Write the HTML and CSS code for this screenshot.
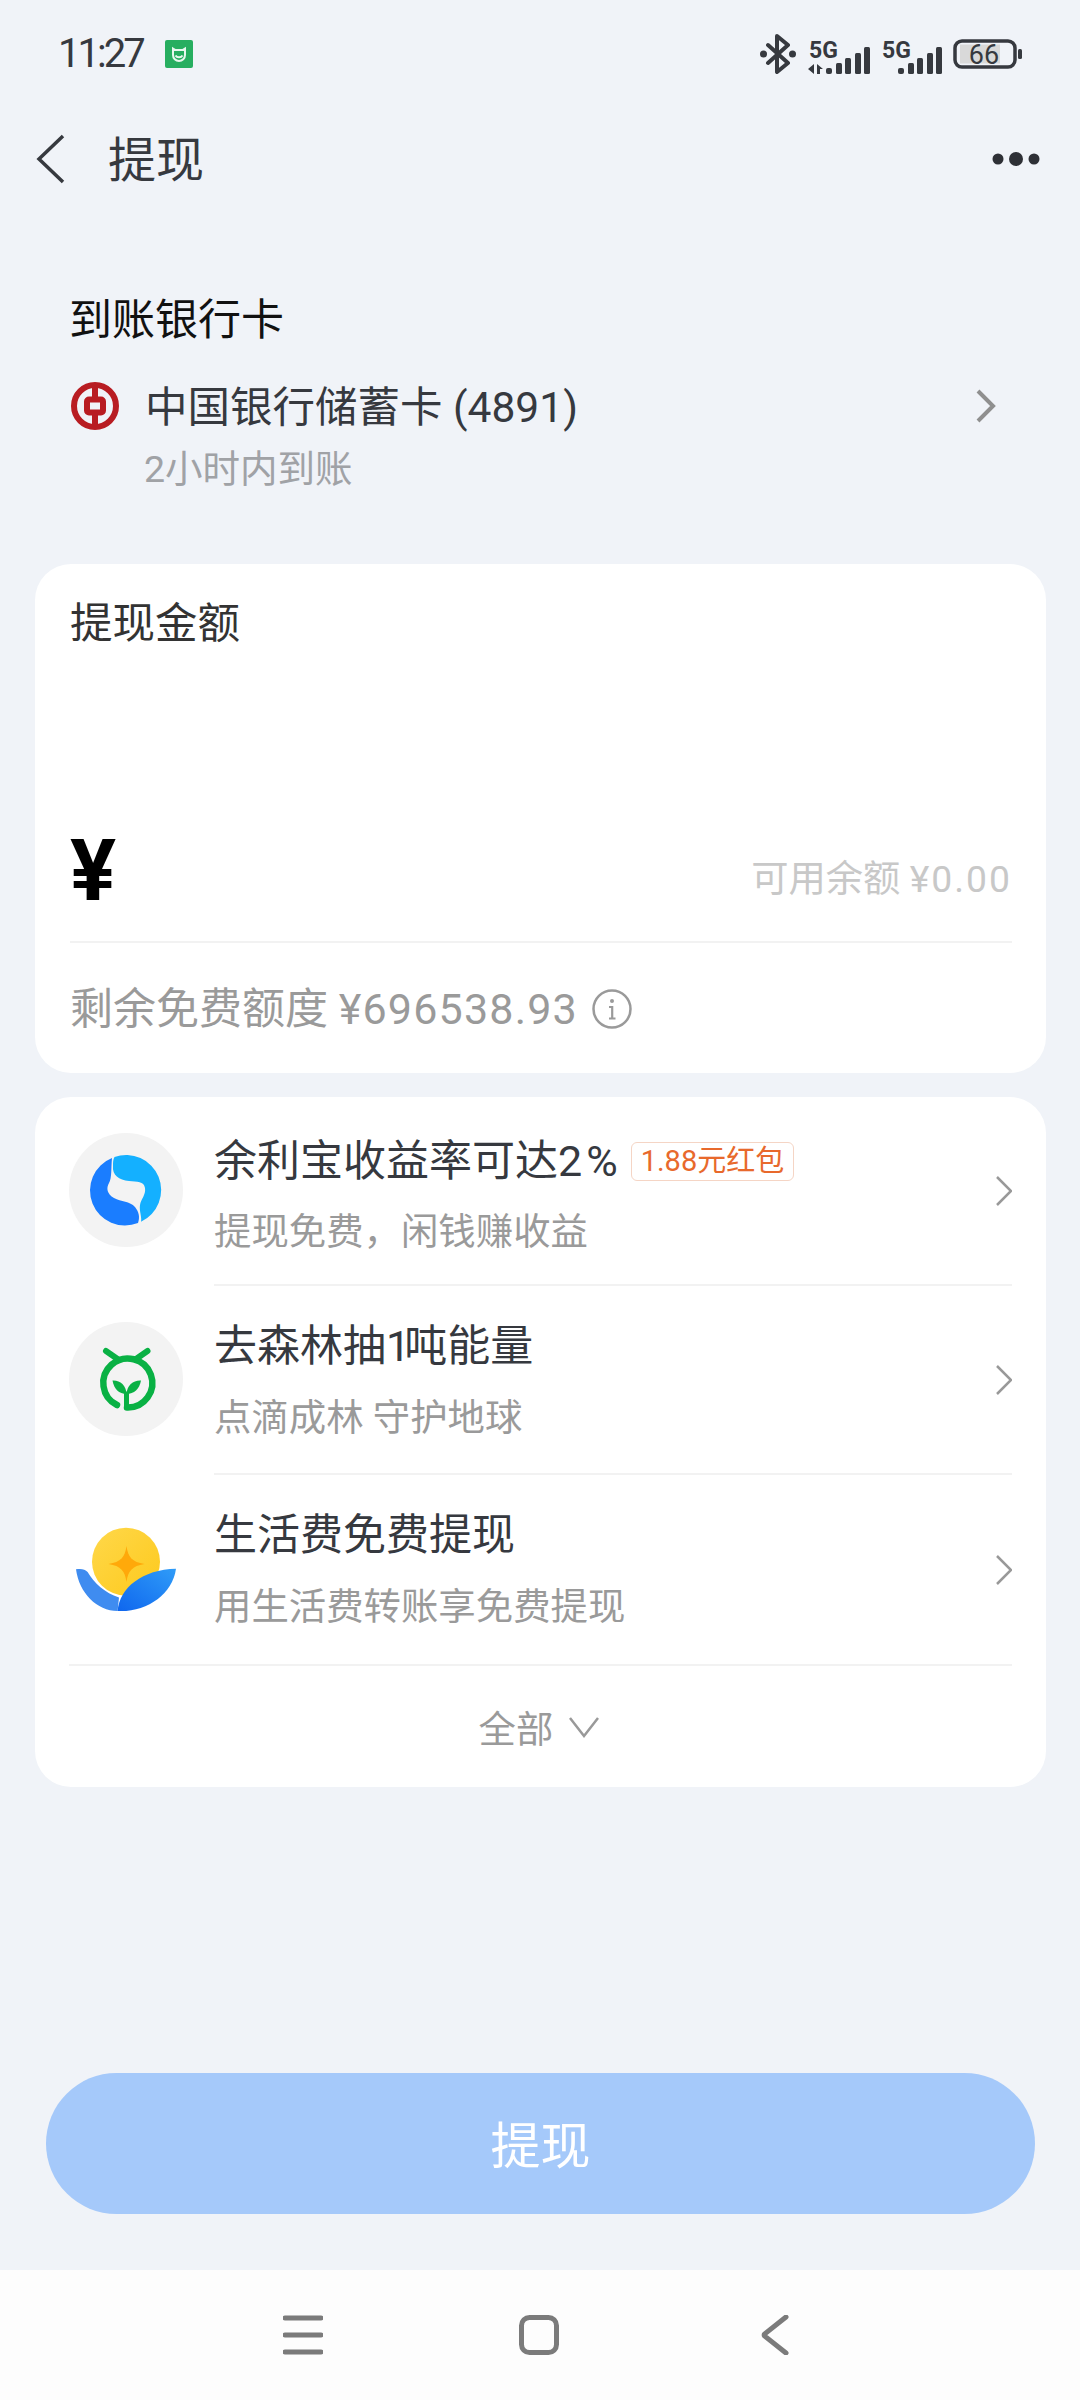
FILE: index.html
```html
<!DOCTYPE html>
<html lang="zh-CN">
<head>
<meta charset="UTF-8">
<title>提现</title>
<link rel="stylesheet" href="styles.css">
</head>
<body>

<div class="status">
  <div class="status-left">
    <span class="time">11:27</span>
    <svg class="mi-icon" width="28" height="28" viewBox="0 0 28 28">
      <rect width="28" height="28" rx="2" fill="#27ae60"/>
      <path d="M8 8.500l2.500 1.500h7L20 8.500V15a6 6 0 0 1-12 0z" fill="none" stroke="#e8f7ee" stroke-width="2"/>
      <path d="M10.500 15.500c1.500 2.400 5.500 2.400 7 0" fill="none" stroke="#e8f7ee" stroke-width="2"/>
    </svg>
  </div>
  <div class="status-right">
    <svg width="36" height="40" viewBox="0 0 36 40">
      <path d="M8 11L28 29L17 38V2L28 11L8 29" fill="none" stroke="#36393f" stroke-width="4" stroke-linejoin="round" stroke-linecap="round"/>
      <circle cx="3.500" cy="20" r="3.500" fill="#36393f"/>
      <circle cx="32.500" cy="20" r="3.500" fill="#36393f"/>
    </svg>
    <svg width="64" height="44" viewBox="0 0 64 44">
      <text x="2" y="26" class="sig-text">5G</text>
      <path d="M7 32V42L1 37ZM10 32L16 37H13V42H10Z" fill="#36393f"/>
      <g fill="#36393f">
        <rect x="19" y="36" width="6" height="6" rx="2"/>
        <rect x="29" y="31" width="6" height="11" rx="1.500"/>
        <rect x="38" y="26" width="6" height="16" rx="1.500"/>
        <rect x="48" y="21" width="6" height="21" rx="1.500"/>
        <rect x="57" y="15" width="6" height="27" rx="1.500"/>
      </g>
    </svg>
    <svg width="60" height="44" viewBox="0 0 60 44">
      <text x="0" y="26" class="sig-text">5G</text>
      <g fill="#36393f">
        <rect x="16" y="36" width="6" height="6" rx="2"/>
        <rect x="26" y="31" width="6" height="11" rx="1.500"/>
        <rect x="35" y="26" width="6" height="16" rx="1.500"/>
        <rect x="45" y="21" width="6" height="21" rx="1.500"/>
        <rect x="54" y="15" width="6" height="27" rx="1.500"/>
      </g>
    </svg>
    <svg width="69" height="44" viewBox="0 0 69 44">
      <rect x="7" y="12.500" width="40" height="19" fill="#d9d9d9"/>
      <rect x="2" y="9" width="60" height="26" rx="7" fill="none" stroke="#36393f" stroke-width="3.500"/>
      <rect x="65" y="17" width="4" height="10" rx="1.500" fill="#36393f"/>
      <text x="31" y="32" class="batt-text">66</text>
    </svg>
  </div>
</div>

<div class="header">
  <div class="header-left">
    <svg class="header-icon" width="30" height="50" viewBox="0 0 30 50">
      <path d="M27 2L3 25L27 48" fill="none" stroke="#36393f" stroke-width="3.500"/>
    </svg>
    <span class="title">提现</span>
  </div>
  <svg class="header-icon" width="48" height="14" viewBox="0 0 48 14">
    <circle cx="6" cy="7" r="5.500" fill="#2e3036"/>
    <circle cx="24" cy="7" r="7" fill="#2e3036"/>
    <circle cx="42" cy="7" r="5.500" fill="#2e3036"/>
  </svg>
</div>

<div class="bank">
  <div class="bank-label">到账银行卡</div>
  <div class="bank-row">
    <svg class="bank-logo" width="50" height="50" viewBox="0 0 50 50">
      <circle cx="25" cy="25" r="21" fill="none" stroke="#b81c22" stroke-width="6"/>
      <rect x="17" y="18.500" width="16" height="13" rx="2" fill="none" stroke="#b81c22" stroke-width="6"/>
      <rect x="22" y="4" width="6" height="12" fill="#b81c22"/>
      <rect x="22" y="34" width="6" height="12" fill="#b81c22"/>
    </svg>
    <span class="bank-name">中国银行储蓄卡 (4891)</span>
    <svg class="bank-arrow" width="20" height="34" viewBox="0 0 20 34">
      <path d="M2 2L17 17L2 32" fill="none" stroke="#8f8f8f" stroke-width="4"/>
    </svg>
  </div>
  <div class="bank-sub">2小时内到账</div>
</div>

<div class="card card-amount">
  <div class="card-label">提现金额</div>
  <div class="amount">
    <span class="yen">¥</span>
    <span class="balance">可用余额 <span class="balance-num">¥0.00</span></span>
  </div>
  <div class="quota">
    <span>剩余免费额度 <span class="quota-num">¥696538.93</span></span>
    <svg width="40" height="40" viewBox="0 0 40 40">
      <circle cx="20" cy="20" r="18.500" fill="none" stroke="#9a9a9a" stroke-width="2.500"/>
      <circle cx="20" cy="12" r="2" fill="#9a9a9a"/>
      <path d="M17 18h3.200v11M17 29.500h6.500" fill="none" stroke="#9a9a9a" stroke-width="2.200"/>
    </svg>
  </div>
</div>

<div class="card card-list">
  <div class="row">
    <div class="logo logo-grey">
      <svg width="114" height="114" viewBox="0 0 114 114">
        <path d="M45.500 24A35 35 0 0 1 72 88.700C73 84 70 78 71 72C72 66 77 62 76 55C75 48 68 49 60 48C50 47 43 42 44 33C44 29 44 27 45.500 24Z" fill="#14b0ff"/>
        <path d="M43 25A35 35 0 0 0 69 90C71 84 70 79 66 74C61 68 52 69 45 65C38 61 37 55 40 50C43 45 42 35 43 25Z" fill="#1a7dff"/>
      </svg>
    </div>
    <div class="row-body">
      <div class="row-text row-text-tag">
        <div class="row-title">余利宝收益率可达<span class="rate">2%</span><span class="tag">1.88元红包</span></div>
        <div class="row-sub row-sub-tag">提现免费，闲钱赚收益</div>
      </div>
      <svg width="16" height="30" viewBox="0 0 16 30">
        <path d="M1 1L15 15L1 29" fill="none" stroke="#999" stroke-width="2.500"/>
      </svg>
    </div>
  </div>
  <div class="row">
    <div class="logo logo-grey">
      <svg width="114" height="114" viewBox="0 0 114 114">
        <g fill="none" stroke="#09b144" stroke-linecap="round">
          <path d="M48 83A24.500 24.500 0 1 1 58 85.500" stroke-width="6.500"/>
          <path d="M37 29L48.500 37M78.500 29L67 37" stroke-width="6"/>
          <path d="M57.500 72V85" stroke-width="5"/>
        </g>
        <path d="M43.500 58.500C51 58 57 63 57.500 72C50 72 45 67 43.500 58.500Z" fill="#09b144"/>
        <path d="M72 58.500C64.500 58 58 63 57.500 72C65 72 70.500 67 72 58.500Z" fill="#09b144"/>
      </svg>
    </div>
    <div class="row-body">
      <div class="row-text">
        <div class="row-title">去森林抽<span class="one">1</span>吨能量</div>
        <div class="row-sub">点滴成林 守护地球</div>
      </div>
      <svg width="16" height="30" viewBox="0 0 16 30">
        <path d="M1 1L15 15L1 29" fill="none" stroke="#999" stroke-width="2.500"/>
      </svg>
    </div>
  </div>
  <div class="row">
    <div class="logo">
      <svg width="114" height="114" viewBox="0 0 114 114">
        <defs>
          <linearGradient id="coin" x1="0" y1="0" x2="1" y2="1">
            <stop offset="0" stop-color="#ffd84a"/>
            <stop offset="1" stop-color="#fdc91c"/>
          </linearGradient>
          <linearGradient id="leaf" x1="0" y1="1" x2="1" y2="0">
            <stop offset="0" stop-color="#0f66ee"/>
            <stop offset="1" stop-color="#2f9cf8"/>
          </linearGradient>
        </defs>
        <circle cx="57" cy="50.700" r="34" fill="url(#coin)"/>
        <path d="M57.500 35C59 46 63 51 75.500 53C63 55 59 60 57.500 71C56 60 52 55 39.500 53C52 51 56 46 57.500 35Z" fill="#ffa90a"/>
        <path d="M18 60C25 73 36 83 51 87L50 100H20Z" fill="#fff"/>
        <path d="M7 58.300C12 57.500 16 58 18.600 61C25 72 36 82 50 86.500L48.600 100C28 100 10 82 7 58.300Z" fill="#3f8cf0"/>
        <path d="M48.600 100C50.300 76.700 73.600 58.300 107 57.700C103.600 83.300 77 101.700 48.600 100Z" fill="url(#leaf)"/>
      </svg>
    </div>
    <div class="row-body row-body-last">
      <div class="row-text">
        <div class="row-title">生活费免费提现</div>
        <div class="row-sub">用生活费转账享免费提现</div>
      </div>
      <svg width="16" height="30" viewBox="0 0 16 30">
        <path d="M1 1L15 15L1 29" fill="none" stroke="#999" stroke-width="2.500"/>
      </svg>
    </div>
  </div>
  <div class="more">
    <span>全部</span>
    <svg width="30" height="22" viewBox="0 0 30 22">
      <path d="M1 2L15 20L29 2" fill="none" stroke="#999" stroke-width="2.500"/>
    </svg>
  </div>
</div>

<div class="submit">提现</div>

<div class="nav">
  <svg width="40" height="40" viewBox="0 0 40 40">
    <path d="M2 3H38M2 20H38M2 37H38" fill="none" stroke="#7b7b7b" stroke-width="5" stroke-linecap="round"/>
  </svg>
  <svg width="40" height="40" viewBox="0 0 40 40">
    <rect x="2.500" y="2.500" width="35" height="35" rx="8" fill="none" stroke="#7b7b7b" stroke-width="5"/>
  </svg>
  <svg width="40" height="40" viewBox="0 0 40 40">
    <path d="M31 2L9.500 19C9 19.500 9 20.500 9.500 21L31 38" fill="none" stroke="#7b7b7b" stroke-width="5" stroke-linecap="round"/>
  </svg>
</div>

</body>
</html>
```

FILE: styles.css
```css
body {
  font-family: Roboto, 'Noto Sans CJK SC', sans-serif;
  background-color: #f0f3f8;
  margin: 0;
  width: 1080px;
  height: 2400px;
  overflow: hidden;
  color: #36393f;
}
svg {
  display: block;
  flex: none;
}

.status {
  height: 108px;
  padding: 0 58px;
  display: flex;
  align-items: center;
  justify-content: space-between;
}
.status-left {
  display: flex;
  align-items: center;
}
.time {
  font-size: 40px;
  line-height: 50px;
  letter-spacing: -3px;
}
.mi-icon {
  margin-left: 22px;
}
.status-right {
  display: flex;
  align-items: center;
  gap: 11px;
}
.sig-text {
  font-size: 23px;
  font-weight: 700;
  fill: #36393f;
}
.batt-text {
  font-size: 27px;
  fill: #36393f;
  text-anchor: middle;
}

.header {
  height: 98px;
  padding: 0 40px 0 36px;
  display: flex;
  align-items: center;
  justify-content: space-between;
}
.header-left {
  display: flex;
  align-items: center;
}
.header-icon {
  margin-top: 4px;
}
.title {
  font-size: 48px;
  margin-left: 42px;
  margin-bottom: 2px;
}

.bank {
  padding: 0 84px 0 70px;
  margin-top: 84px;
}
.bank-label {
  font-size: 43px;
  line-height: 60px;
  color: #111;
  margin-left: -1px;
}
.bank-row {
  display: flex;
  align-items: center;
  margin-top: 25px;
  height: 60px;
}
.bank-logo {
  margin-top: 2px;
}
.bank-name {
  font-size: 42.500px;
  margin-left: 25px;
  margin-bottom: 4px;
}
.bank-arrow {
  margin-left: auto;
  margin-top: 2px;
}
.bank-sub {
  font-size: 37.500px;
  line-height: 50px;
  color: #a0a2a6;
  margin-top: 9px;
  margin-bottom: -1px;
  padding-left: 74px;
}

.card {
  background-color: #fff;
  margin: 0 34px 0 35px;
  border-radius: 36px;
}
.card-amount {
  margin-top: 71px;
  padding: 30px 34px 34px 35px;
}
.card-label {
  font-size: 42.500px;
  line-height: 60px;
  color: #333;
}
.amount {
  margin-top: 146px;
  height: 141px;
  border-bottom: 2px solid #f2f2f2;
  display: flex;
  align-items: center;
  justify-content: space-between;
}
.yen {
  font-size: 86px;
  font-weight: 700;
  color: #000;
  line-height: 84px;
}
.balance {
  font-size: 37.300px;
  color: #c8c8c8;
  margin-top: 10px;
}
.balance-num {
  letter-spacing: 2px;
}
.quota {
  margin-top: 36px;
  display: flex;
  align-items: center;
  gap: 14px;
  font-size: 43px;
  line-height: 60px;
  color: #9a9a9a;
}
.quota-num {
  letter-spacing: 1.200px;
}

.card-list {
  margin-top: 24px;
}
.row {
  display: flex;
  padding-left: 34px;
}
.logo {
  width: 114px;
  height: 114px;
  margin: 36px 31px 0 0;
  border-radius: 50%;
  flex: none;
}
.logo-grey {
  background-color: #f3f3f3;
}
.row-body {
  flex: 1;
  height: 189px;
  box-sizing: border-box;
  margin-right: 34px;
  border-bottom: 2px solid #f2f2f2;
  display: flex;
  align-items: center;
  justify-content: space-between;
}
.row-body-last {
  border-bottom: none;
}
.row-text {
  align-self: flex-start;
  padding-top: 30px;
}
.row-text-tag {
  padding-top: 34px;
}
.row-title {
  font-size: 43px;
  line-height: 60px;
  display: flex;
  align-items: center;
}
.rate {
  letter-spacing: 4px;
}
.one {
  letter-spacing: -6px;
}
.row-sub {
  font-size: 37.400px;
  line-height: 50px;
  color: #9a9a9a;
  margin-top: 17px;
}
.row-sub-tag {
  margin-top: 16px;
}
.tag {
  font-size: 29px;
  line-height: 37px;
  color: #e8692c;
  border: 1px solid #f5d5c5;
  border-radius: 6px;
  padding: 0 9px;
  margin-left: 9px;
}

.more {
  margin: 0 34px;
  height: 121px;
  padding-right: 3px;
  border-top: 2px solid #f2f2f2;
  display: flex;
  align-items: center;
  justify-content: center;
  gap: 16px;
  font-size: 37.400px;
  color: #9a9a9a;
}

.submit {
  margin: 286px 45px 0 46px;
  height: 141px;
  box-sizing: border-box;
  padding-bottom: 4px;
  border-radius: 71px;
  background-color: #a5c9fa;
  color: #fff;
  font-size: 50px;
  display: flex;
  align-items: center;
  justify-content: center;
}

.nav {
  margin-top: 56px;
  height: 130px;
  background-color: #fdfdfd;
  display: flex;
  align-items: center;
  justify-content: center;
  gap: 196px;
  padding-right: 2px;
}
```
